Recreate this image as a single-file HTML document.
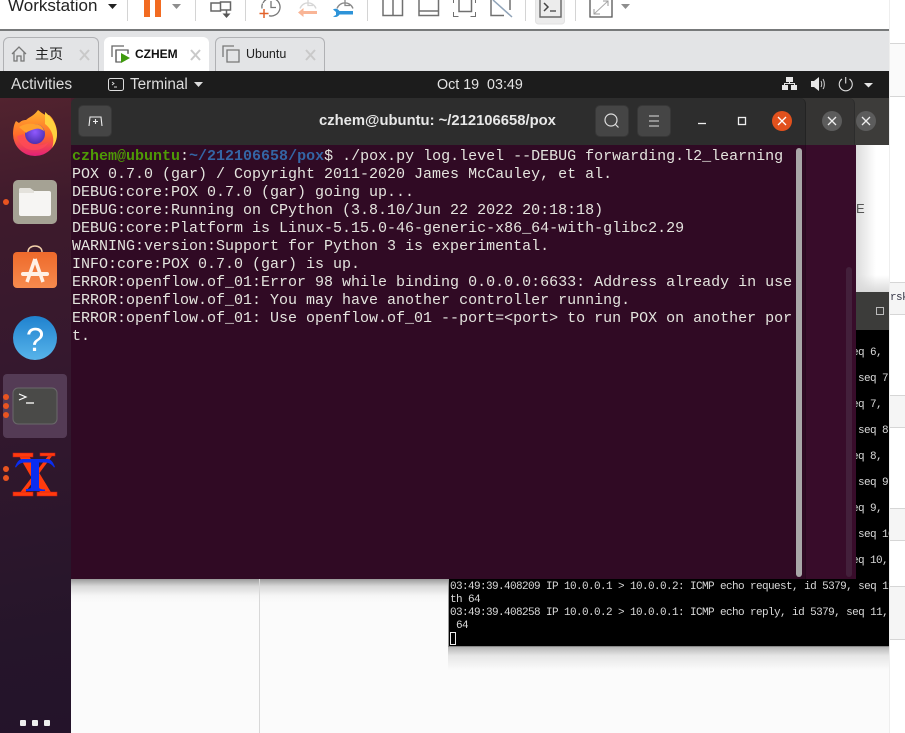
<!DOCTYPE html>
<html><head><meta charset="utf-8"><style>
*{box-sizing:border-box}
html,body{margin:0;padding:0}
body{width:905px;height:733px;overflow:hidden;background:#fff;position:relative;font-family:"Liberation Sans","Noto Sans CJK SC",sans-serif}
.a{position:absolute}
.tab{position:absolute;top:37px;height:34px;border:1px solid #b0b1b4;border-bottom:0;border-radius:6px 6px 0 0;background:#e3e4e6}
.term{position:absolute;left:72px;top:148px;margin:0;font:15px/18px "Liberation Mono",monospace;color:#e4e4de;white-space:pre}
.x{position:absolute;font:11px/13px "Liberation Mono",monospace;letter-spacing:-.6px;color:#d8d8d8;white-space:pre}
.btn{position:absolute;top:105px;width:34px;height:32px;background:#454545;border-radius:5px;border:1px solid #383838}
.t{position:absolute;white-space:nowrap}
.row{position:absolute;left:890px;width:15px;background:#f5f5f5;border-top:1px solid #d6d6d6;border-bottom:1px solid #d6d6d6}
</style></head><body>

<!-- right strip rows -->
<div class="a" style="left:890px;top:43px;width:15px;height:54px;background:#fafafa;border-top:1px solid #d6d6d6;border-bottom:1px solid #d6d6d6"></div>
<div class="row" style="top:282px;height:33px"></div>
<div class="x" style="left:890px;top:292px;color:#334">rsk</div>
<div class="row" style="top:395px;height:33px"></div>
<div class="row" style="top:508px;height:33px"></div>
<div class="row" style="top:586px;height:54px"></div>
<div class="a" style="left:889px;top:0;width:1px;height:733px;background:#eee"></div>

<!-- toolbar -->
<svg class="a" style="left:0;top:0" width="890" height="32" viewBox="0 0 890 32" fill="none">
<rect x="0" y="29" width="889" height="2" fill="#77797a"/>
<path d="M108 4h9l-4.500 5z" fill="#222"/>
<g stroke="#d4d4d4"><path d="M127.500 0v21M195.500 0v21M245.500 0v21M367.500 0v21M525.500 0v21M575.500 0v21"/></g>
<rect x="144" y="0" width="6" height="17" fill="#f26b21"/><rect x="155" y="0" width="6" height="17" fill="#f26b21"/>
<path d="M172 4h9l-4.500 5z" fill="#8e8e8e"/>
<g stroke="#666" stroke-width="1.500"><path d="M211 3h9.500v8H211zM220.500 2h10v8h-10zM226.500 10v5"/></g><path d="M222.500 13.500h8l-4 4.500z" fill="#555"/>
<!-- clock icons -->
<g stroke="#777" stroke-width="1.300"><path d="M263 3a9 9 0 1 1 6 12.800M271 1v6.500h5"/><path d="M262.500 3.500a9 9 0 0 0-0.500 5"/></g>
<path d="M264 9v9M259.500 13.500h9" stroke="#e2622a" stroke-width="1.500"/>
<g stroke="#d6d6d6" stroke-width="1.300"><path d="M300 8.500a8.500 8.500 0 0 1 16 0M308 0v5.500h5"/></g>
<path d="M300 12.500h17" stroke="#f9b596" stroke-width="3"/><path d="M303.500 8l-5.500 4.500 5.500 4.500z" fill="#f9b596"/>
<g stroke="#888" stroke-width="1.300"><path d="M337 8.500a8.500 8.500 0 0 1 16 0M345 0v5.500h5"/></g>
<path d="M333 9.500c3-1.500 5-.5 6.500 1.500H353v3.500h-13.500c-1.500 2.500-4 3-6.500 2l3-1.500v-3z" fill="#2d93d8"/>
<!-- panels -->
<g stroke="#707070" stroke-width="1.500">
<path d="M383 0v15.500h19.500V0M393 0v15.500"/>
<path d="M419 0v15.500h19.500V0M419 11h19.500"/>
<path d="M459 0v11.500h12.500V0"/><path d="M453.500 3v-3M453.500 12v4.500h5M475.500 12v4.500h-5M475.500 0v3" stroke-width="1"/>
<path d="M491 0v15.500h13M510 0v10"/></g>
<path d="M493 0l19 17" stroke="#8fa3b8" stroke-width="1.500"/>
<rect x="535.500" y="-2" width="29" height="26" rx="3" fill="#ececec" stroke="#e2e2e2"/>
<path d="M540 -1v18h21V-1" stroke="#666" stroke-width="1.400"/>
<path d="M544 3l4 4-4 4" stroke="#444" stroke-width="1.500"/><path d="M550 11h6" stroke="#444" stroke-width="1.300"/>
<path d="M590 -1v18h22V-1" stroke="#555" stroke-width="1.300"/>
<path d="M594 14l14-13" stroke="#aaa"/><path d="M594 9v5h6M603 1h5v5" stroke="#999"/>
<path d="M621 4h9l-4.500 5z" fill="#8e8e8e"/>
</svg>
<div class="t" style="left:8px;top:-4px;font-size:17px;line-height:20px;color:#222">Workstation</div>

<!-- tab bar -->
<div class="a" style="left:0;top:31px;width:889px;height:40px;background:#e3e4e6"></div>
<div class="tab" style="left:3px;width:96px"></div>
<div class="tab" style="left:104px;width:105px;background:#fff;border-color:#fff"></div>
<div class="tab" style="left:215px;width:110px"></div>
<svg class="a" style="left:0;top:37px" width="330" height="34" viewBox="0 37 330 34" fill="none">
<path d="M12 54l7-7 7 7M14 52v9h3v-5h4v5h3v-9" stroke="#777" stroke-width="1.300"/>
<path d="M80 50l9 10M89 50l-9 10" stroke="#c9c9c9" stroke-width="2"/>
<path d="M191 50l9 10M200 50l-9 10" stroke="#c9c9c9" stroke-width="2"/>
<path d="M306 50l9 10M315 50l-9 10" stroke="#c9c9c9" stroke-width="2"/>
<path d="M112 57v-11h12M116 62v-12h12v3" stroke="#666" stroke-width="1.300" fill="none"/>
<path d="M116 50v12h5M128 50v4" stroke="#666" stroke-width="1.300"/>
<path d="M121 53l9 5-9 5z" fill="#3f9a0e"/>
<path d="M223 57v-11h11M227 50h12v12h-12z" stroke="#777" stroke-width="1.300"/>
</svg>
<div class="t" style="left:35px;top:45px;font-size:14px;line-height:18px;color:#222">主页</div>
<div class="t" style="left:135px;top:46px;font-size:12px;line-height:17px;font-weight:bold;color:#111">CZHEM</div>
<div class="t" style="left:246px;top:46px;font-size:12.500px;line-height:17px;color:#222">Ubuntu</div>

<!-- page behind -->
<div class="a" style="left:71px;top:145px;width:818px;height:588px;background:#fbfbfb"></div>
<div class="a" style="left:71px;top:579px;width:377px;height:24px;background:linear-gradient(#9a9a9a,#d8d8d8 30%,#f6f6f6 70%,#fbfbfb)"></div>
<div class="a" style="left:448px;top:646px;width:441px;height:24px;background:linear-gradient(#b0b0b0,#e6e6e6 40%,#fbfbfb)"></div>
<div class="a" style="left:259px;top:579px;width:1px;height:154px;background:#d8d8d8"></div>
<div class="a" style="left:856px;top:145px;width:33px;height:147px;background:linear-gradient(90deg,#dcdcdc,#fff 60%)"></div>
<div class="a" style="left:856px;top:275px;width:33px;height:18px;background:linear-gradient(rgba(255,255,255,0),#d8d8d8)"></div>
<div class="t" style="left:856px;top:201px;font-size:13px;line-height:16px;color:#555">E</div>

<!-- xterm -->
<div class="a" style="left:448px;top:292px;width:441px;height:355px;background:#000;border-left:1px solid #999;border-bottom:1px solid #888"></div>
<div class="a" style="left:448px;top:292px;width:441px;height:38px;background:#3c3c3a"></div>
<div class="a" style="left:876px;top:307px;width:8px;height:8px;border:1px solid #bbb"></div>
<div class="a" style="left:856px;top:330px;width:33px;height:249px;overflow:hidden">
<div class="x" style="left:-10px;top:17px">seq 6,</div>
<div class="x" style="left:2px;top:43px">seq 7</div>
<div class="x" style="left:-10px;top:69px">seq 7,</div>
<div class="x" style="left:2px;top:95px">seq 8</div>
<div class="x" style="left:-10px;top:121px">seq 8,</div>
<div class="x" style="left:2px;top:147px">seq 9</div>
<div class="x" style="left:-10px;top:173px">seq 9,</div>
<div class="x" style="left:2px;top:199px">seq 10</div>
<div class="x" style="left:-10px;top:225px">seq 10,</div>
</div>
<div class="a" style="left:450px;top:581px;width:439px;height:65px;overflow:hidden">
<div class="x" style="left:0;top:0">03:49:39.408209 IP 10.0.0.1 &gt; 10.0.0.2: ICMP echo request, id 5379, seq 11
th 64
03:49:39.408258 IP 10.0.0.2 &gt; 10.0.0.1: ICMP echo reply, id 5379, seq 11,
 64</div>
<div class="a" style="left:0;top:51px;width:6px;height:13px;border:1px solid #eee"></div>
</div>

<!-- gnome top bar -->
<div class="a" style="left:0;top:71px;width:889px;height:27px;background:#1c1c1c"></div>
<div class="t" style="left:11px;top:76px;font-size:15.500px;line-height:18px;color:#dcdcdc">Activities</div>
<div class="t" style="left:130px;top:76px;font-size:15.300px;line-height:18px;color:#dcdcdc">Terminal</div>
<div class="t" style="left:437px;top:76px;font-size:14.300px;line-height:18px;color:#e4e4e4;white-space:pre">Oct 19  03:49</div>
<svg class="a" style="left:0;top:71px" width="889" height="27" viewBox="0 71 889 27" fill="none">
<rect x="108.500" y="78.500" width="15" height="12" rx="2" stroke="#ddd"/>
<path d="M112 82l2 1.500-2 1.500M114 87h3" stroke="#ddd" stroke-width=".9"/>
<path d="M194 82h9l-4.500 5z" fill="#ddd"/>
<g fill="#e6e6e6"><rect x="786" y="77" width="7" height="5"/><rect x="782" y="85" width="6" height="5"/><rect x="791" y="85" width="6" height="5"/></g>
<path d="M789.500 81v3M784.500 85v-1.500h10V85" stroke="#e6e6e6"/>
<path d="M811 81h3l5-4v14l-5-4h-3z" fill="#e6e6e6"/><path d="M821 81c1 1.500 1 4.500 0 6M823 79c1.800 3 1.800 7.500 0 10" stroke="#ccc"/>
<path d="M842 79a6.500 6.500 0 1 0 7.500 0M845.700 77v6.500" stroke="#ddd" stroke-width="1.100"/>
<path d="M864 83h9l-4.500 4.500z" fill="#e6e6e6"/>
</svg>

<!-- dock -->
<div class="a" style="left:71px;top:98px;width:8px;height:8px;background:#46202e"></div>
<div class="a" style="left:0;top:98px;width:71px;height:635px;background:linear-gradient(170deg,#52232f 0,#3e1a2c 18%,#34182e 45%,#25152a 85%,#24132a 100%)"></div>
<svg class="a" style="left:0;top:98px" width="71" height="410" viewBox="0 98 71 410" fill="none">
<defs>
<linearGradient id="ff" x1="0" y1="0" x2="0" y2="1"><stop offset="0" stop-color="#ffb52e"/><stop offset=".55" stop-color="#ff6a2b"/><stop offset="1" stop-color="#e31f79"/></linearGradient>
<radialGradient id="fp" cx=".5" cy=".4" r=".6"><stop offset="0" stop-color="#9059ff"/><stop offset="1" stop-color="#4b2fb0"/></radialGradient>
<linearGradient id="sw" x1="0" y1="0" x2="0" y2="1"><stop offset="0" stop-color="#ee6a2b"/><stop offset="1" stop-color="#f68a4e"/></linearGradient>
<linearGradient id="hp" x1="0" y1="0" x2="0" y2="1"><stop offset="0" stop-color="#1f82cf"/><stop offset="1" stop-color="#58b4ea"/></linearGradient>
</defs>
<!-- firefox -->
<path d="M38 110c5 4 8 6 11 5 3 2 8 9 8 19a22 22 0 0 1-44 0c0-5 1-10 3-13l3 2c2-2 4-3 7-3 3-3 8-4 12-10z" fill="url(#ff)"/>
<path d="M45 112c6 5 12 12 12 22 0 6-2 10-5 14 3-8 1-18-7-24z" fill="#ffd23f"/>
<circle cx="35" cy="134" r="10" fill="url(#fp)"/>
<path d="M19 127c5-3 10-4 15-3 6 0 9 3 10 7-3-2-6-3-9-2-3 1-7 2-9 4-2-2-5-4-7-6z" fill="#ffa02e"/>
<path d="M17 136c2 8 9 15 18 14 6 0 11-3 14-8-3 2-7 4-12 3-6 0-12-4-13-11z" fill="#ff4a5a" opacity=".75"/>
<!-- files -->
<rect x="13" y="180" width="44" height="44" rx="5" fill="#a5a294"/>
<path d="M19 190a2 2 0 0 1 2-2h9l4 3h15a2 2 0 0 1 2 2v21a2 2 0 0 1-2 2H21a2 2 0 0 1-2-2z" fill="#f6f5f3"/>
<path d="M19 190a2 2 0 0 1 2-2h9l4 3v2H19z" fill="#e4e2dc"/>
<circle cx="6" cy="202" r="3" fill="#e95420"/>
<!-- software -->
<path d="M28 252c0-8 14-8 14 0" stroke="#f2cfa9" stroke-width="1.500"/>
<rect x="13" y="252" width="44" height="36" rx="4" fill="url(#sw)"/>
<path d="M35 259l-8 23M35 259l8 23" stroke="#fff0e6" stroke-width="3.500"/>
<rect x="21" y="272" width="28" height="4" rx="2" fill="#fff0e6"/>
<!-- help -->
<circle cx="35" cy="338" r="22" fill="url(#hp)"/>
<text x="35" y="351" text-anchor="middle" font-family="Liberation Sans" font-size="33" fill="#fff">?</text>
<!-- terminal -->
<rect x="3" y="374" width="64" height="64" rx="4" fill="#543b55"/>
<rect x="13" y="388" width="44" height="36" rx="5" fill="#4a4a48" stroke="#6a686a"/>
<path d="M19 394l7 3-7 3" stroke="#fff" stroke-width="1.200"/><path d="M26 403h8" stroke="#fff" stroke-width="1.300"/>
<circle cx="6" cy="397" r="3" fill="#e95420"/><circle cx="6" cy="406" r="3" fill="#e95420"/><circle cx="6" cy="415" r="3" fill="#e95420"/>
<!-- Tk -->
<path d="M19 456h10L52 494H41z" fill="#ff3b0d"/>
<path d="M48 456l4 0L24 494h-5z" fill="#ff3b0d"/>
<path d="M13 453h20v4H13zM40 453h15v3H40zM13 492h20v4H13zM37 492h20v4H37z" fill="#ff3b0d" stroke="#c81818" stroke-width=".6"/>
<path d="M15 467c2-5 4-8 8-8h24c4 0 6 3 8 8l-1 .5c-2-3-5-5-9-5h-6v25c0 1 2 2 6 2v1.500H26V489c4 0 5-1 5-2V462.500h-6c-4 0-7 2-9 5z" fill="#0a2df0"/>
<circle cx="6" cy="469" r="3" fill="#e95420"/><circle cx="6" cy="478" r="3" fill="#e95420"/>
</svg>
<div class="a" style="left:20px;top:720px;width:6px;height:6px;border-radius:1px;background:#eee"></div>
<div class="a" style="left:32px;top:720px;width:6px;height:6px;border-radius:1px;background:#eee"></div>
<div class="a" style="left:44px;top:720px;width:6px;height:6px;border-radius:1px;background:#eee"></div>

<!-- stacked window headers -->
<div class="a" style="left:800px;top:98px;width:89px;height:47px;background:#3d3c3a"></div>
<div class="a" style="left:800px;top:98px;width:55px;height:47px;background:#353433;border-radius:0 6px 0 0;border-right:1px solid #2c2c2c"></div>
<div class="a" style="left:805px;top:145px;width:51px;height:434px;background:#380c2a"></div>
<div class="a" style="left:846px;top:267px;width:6px;height:310px;border-radius:3px;background:#43203b"></div>

<!-- terminal -->
<div class="a" style="left:71px;top:98px;width:735px;height:47px;background:#2d2d2d;border-radius:6px 6px 0 0;border-right:1px solid #232323"></div>
<div class="a" style="left:71px;top:145px;width:734px;height:434px;background:#300a24"></div>
<div class="a" style="left:805px;top:145px;width:1px;height:434px;background:#290920"></div>
<div class="a" style="left:796px;top:148px;width:6px;height:429px;border-radius:3px;background:#a9a7a8"></div>
<div class="btn" style="left:78px"></div>
<div class="btn" style="left:595px"></div>
<div class="btn" style="left:637px"></div>
<div class="t" style="left:319px;top:112px;font-size:14.800px;line-height:18px;font-weight:bold;color:#e8e8e8">czhem@ubuntu: ~/212106658/pox</div>
<svg class="a" style="left:71px;top:98px" width="818" height="47" viewBox="71 98 818 47" fill="none">
<path d="M89 126l1-9h11l1 9M95.500 119v5M93 121.500h5" stroke="#eee" stroke-width="1.100"/>
<circle cx="611" cy="120" r="6" stroke="#ddd" stroke-width="1.200"/><path d="M615.500 124.500l3 3" stroke="#ddd" stroke-width="1.200"/>
<path d="M649 116h10M649 121h10M649 126h10" stroke="#e0e0e0" stroke-width="1.100"/>
<path d="M698 123.500h8" stroke="#eee" stroke-width="1.300"/>
<rect x="738.500" y="117.500" width="7" height="7" stroke="#eee" stroke-width="1.300"/>
<circle cx="782" cy="121" r="10" fill="#e2511d"/><path d="M778 117l8 8M786 117l-8 8" stroke="#fff" stroke-width="1.300"/>
<circle cx="832" cy="121" r="10" fill="#5c5c5c"/><path d="M828 117l8 8M836 117l-8 8" stroke="#eee" stroke-width="1.300"/>
<circle cx="866" cy="121" r="10" fill="#5c5c5c"/><path d="M862 117l8 8M870 117l-8 8" stroke="#eee" stroke-width="1.300"/>
</svg>
<pre class="term"><b style="color:#4e9a06">czhem@ubuntu</b>:<b style="color:#3465a4">~/212106658/pox</b>$ ./pox.py log.level --DEBUG forwarding.l2_learning
POX 0.7.0 (gar) / Copyright 2011-2020 James McCauley, et al.
DEBUG:core:POX 0.7.0 (gar) going up...
DEBUG:core:Running on CPython (3.8.10/Jun 22 2022 20:18:18)
DEBUG:core:Platform is Linux-5.15.0-46-generic-x86_64-with-glibc2.29
WARNING:version:Support for Python 3 is experimental.
INFO:core:POX 0.7.0 (gar) is up.
ERROR:openflow.of_01:Error 98 while binding 0.0.0.0:6633: Address already in use
ERROR:openflow.of_01: You may have another controller running.
ERROR:openflow.of_01: Use openflow.of_01 --port=&lt;port&gt; to run POX on another por
t.</pre>
</body></html>
